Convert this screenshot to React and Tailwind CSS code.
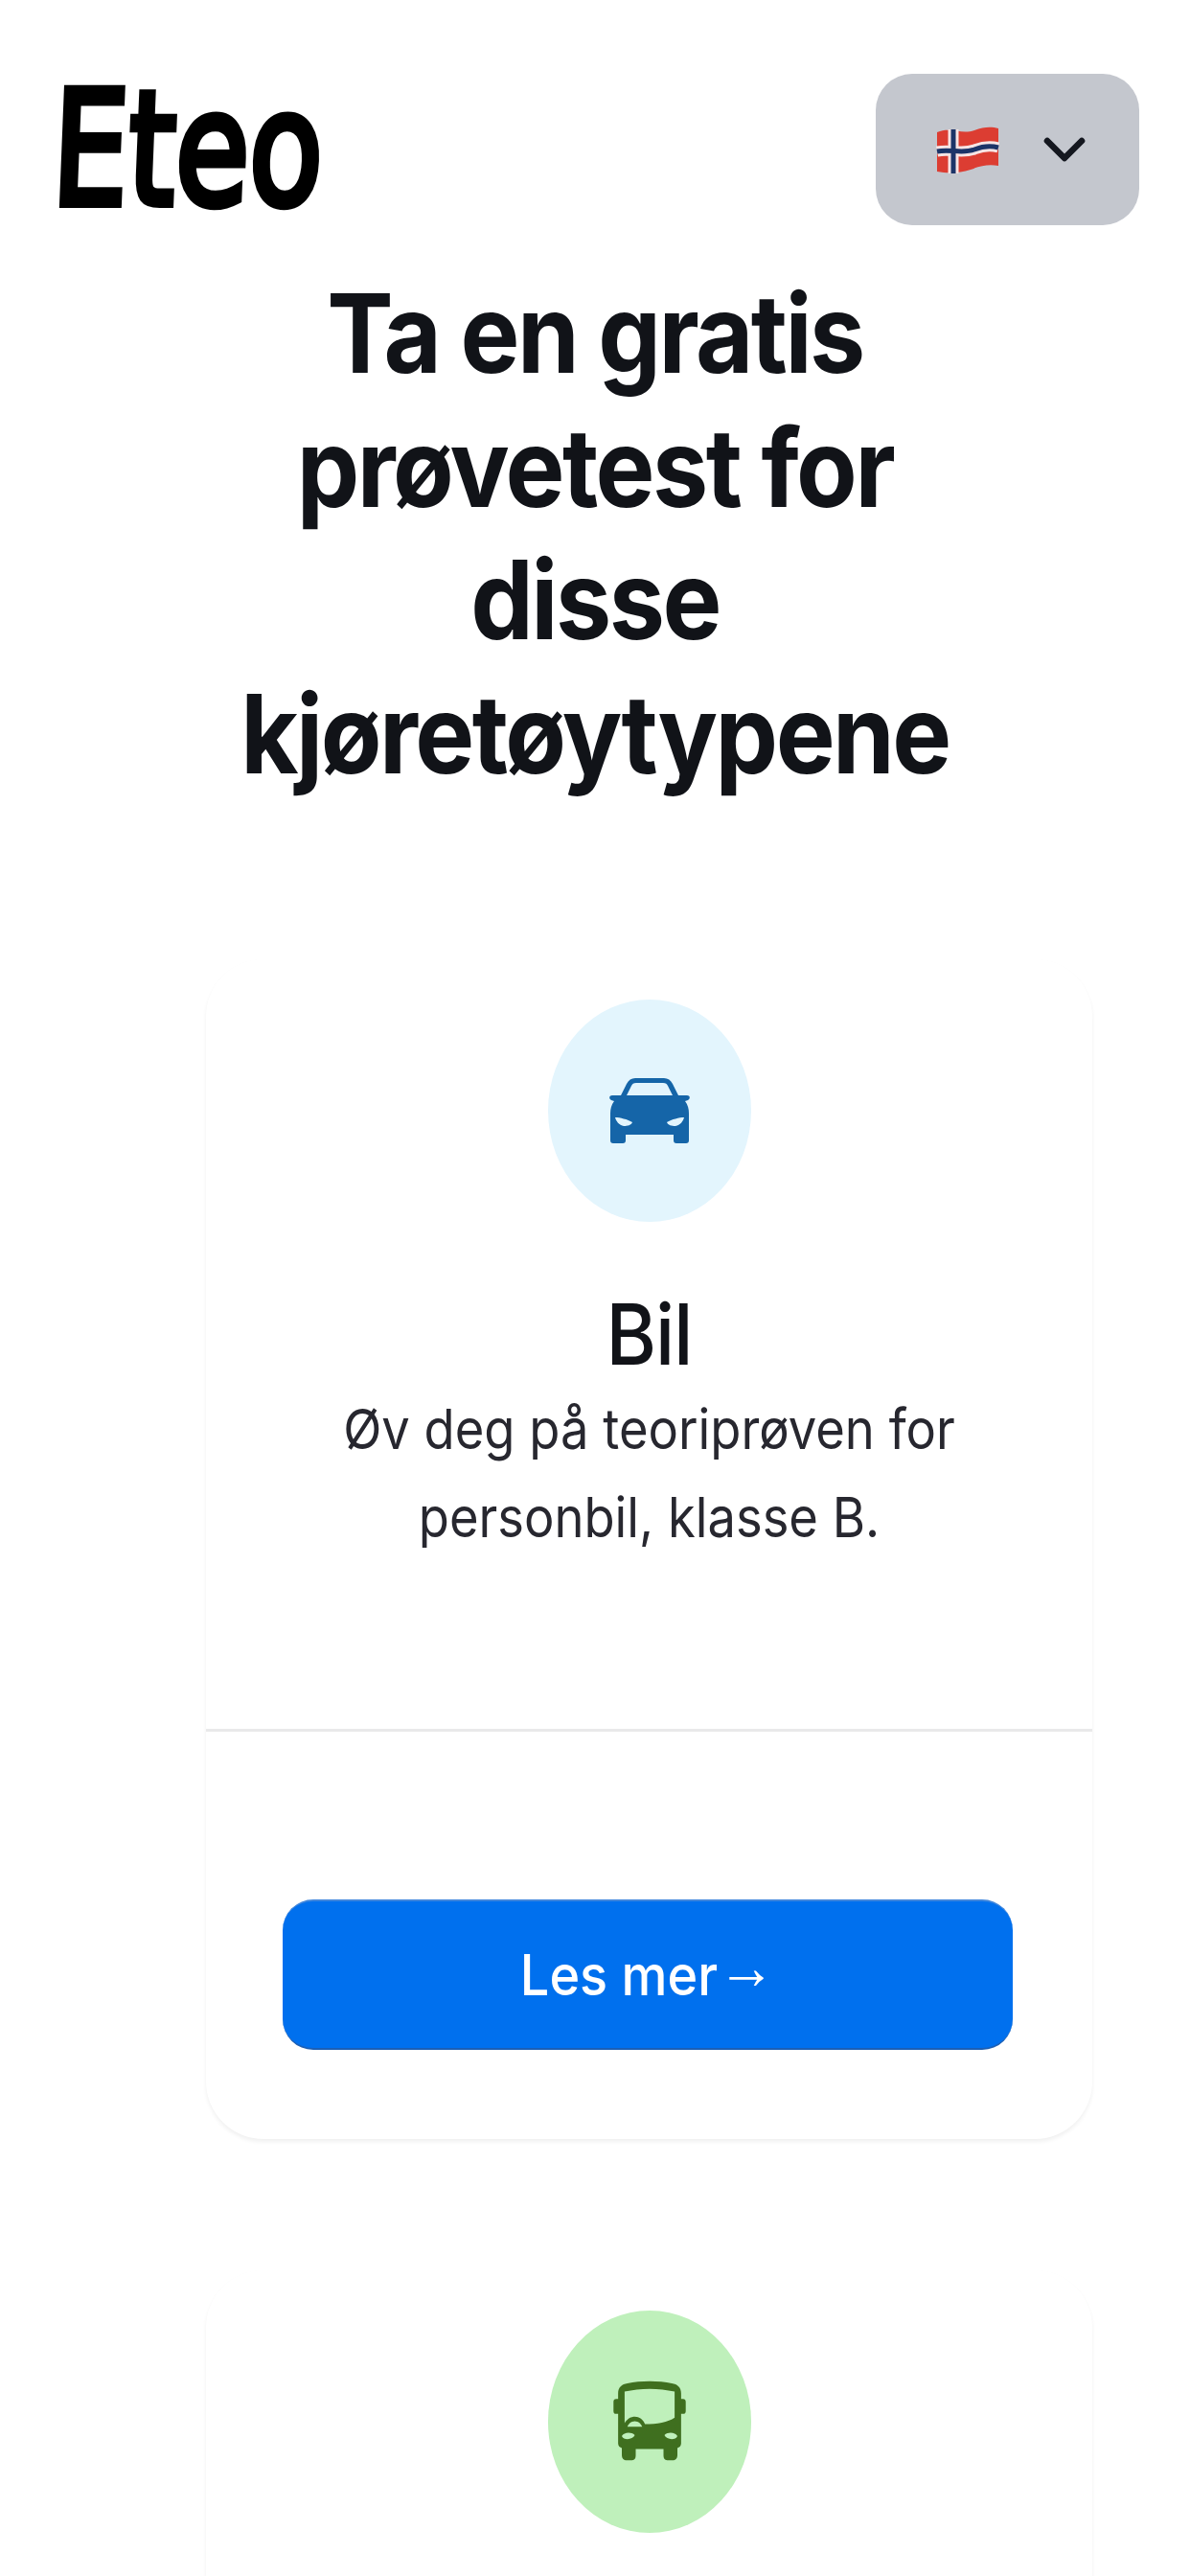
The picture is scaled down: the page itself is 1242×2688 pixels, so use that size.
import React from 'react';
import { ChevronDown } from 'lucide-react';

const FlagNo = () => (
  <svg viewBox="0 0 66 54" className="w-[66px] h-[54px]">
    <path d="M1 9C16 3 26 12 40 7C50 3 58 3 65 5V44C55 42 46 44 36 48C24 52 12 52 1 50Z" fill="#dc3d32" />
    <path d="M1 29C16 26 26 32 40 27C50 23 58 23 65 25" fill="none" stroke="#f6e4e4" strokeWidth="11" />
    <path d="M18 6V52" fill="none" stroke="#f6e4e4" strokeWidth="11" />
    <path d="M1 29C16 26 26 32 40 27C50 23 58 23 65 25" fill="none" stroke="#1c3468" strokeWidth="5" />
    <path d="M18 6V52" fill="none" stroke="#1c3468" strokeWidth="5" />
  </svg>
);

const CarIcon = () => (
  <svg viewBox="0 0 86 70" className="w-[86px] h-[70px]">
    <path
      fill="#1565a8"
      fillRule="evenodd"
      d="M28 1H58C62 1 65 3 67 7L73 19H82C85 19 86 22 83 24L80 25C83 29 84 33 84 38V66C84 68 83 69 81 69H71C69 69 68 68 68 66V60H18V66C18 68 17 69 15 69H5C3 69 2 68 2 66V38C2 33 3 29 6 25L3 24C0 22 1 19 4 19H13L19 7C21 3 24 1 28 1ZM29 6C26 6 25 7 24 9L19 19H67L62 9C61 7 60 6 57 6ZM7 42C12 42 20 44 25 47C24 50 20 51 16 51C11 50 8 46 7 42ZM79 42C74 42 66 44 61 47C62 50 66 51 70 51C75 50 78 46 79 42Z"
    />
  </svg>
);

const BusIcon = () => (
  <svg viewBox="0 0 80 90" className="w-[80px] h-[87px]">
    <path
      fill="#3f6f1f"
      fillRule="evenodd"
      d="M6 14C6 7 10 4 16 3C30 0 50 0 64 3C70 4 74 7 74 14V20H76C78 20 79 21 79 23V33C79 35 78 36 76 36H74V68C74 71 72 72 70 73V81C70 84 68 86 66 86H59C56 86 55 84 55 81V74H25V81C25 84 24 86 21 86H14C12 86 10 84 10 81V73C8 72 6 71 6 68V36H4C2 36 1 35 1 33V23C1 21 2 20 4 20H6ZM13 12V46C16 41 20 39 24 39C29 39 33 42 35 47C48 47 60 45 67 40V12C50 8 30 8 13 12ZM24 44C20 44 17 47 16 50L32 50C31 47 28 44 24 44ZM10 60C12 56 20 55 24 59C22 64 12 65 10 60ZM70 60C68 56 60 55 56 59C58 64 68 65 70 60Z"
    />
  </svg>
);

function VehicleCard({ circle, icon, title, lines }) {
  return (
    <div className="w-[925px] h-[1231px] bg-white rounded-[60px] shadow-[0_3px_4px_rgba(0,0,0,0.06)] flex flex-col items-center shrink-0">
      <div className={`w-[212px] h-[232px] rounded-[50%] flex items-center justify-center mt-[42px] ${circle}`}>
        {icon}
      </div>
      {/* second card runs off the bottom of the page, only its circle shows */}
      {title && (
        <>
          <h2 className="mt-[72px] text-[80px] leading-[90px] font-medium tracking-[-1px] text-[#111318] scale-y-110">{title}</h2>
          <p className="mt-[16px] text-[52.5px] leading-[84px] text-[#27272f] text-center scale-y-110">
            {lines[0]}
            <br />
            {lines[1]}
          </p>
          <div className="w-full h-[3px] bg-[#e9e9ea] mt-[183px]" />
          <div className="w-full pl-[80px] pr-[83px] mt-[175px]">
            <button className="w-full h-[157px] rounded-[32px] bg-[#0070ee] border-t-2 border-t-[#3f86dc] border-b-2 border-b-[#1c5fb4] flex items-center justify-center text-white text-[54px] font-medium">
              <span className="scale-y-110">
                Les mer
                <span className="inline-block -translate-y-[6px] font-['Liberation_Sans',sans-serif] font-normal text-[60px] leading-none">→</span>
              </span>
            </button>
          </div>
        </>
      )}
    </div>
  );
}

export default function App() {
  return (
    <div className="w-[1242px] h-[2688px] overflow-hidden bg-white font-['Inter','Noto_Sans',sans-serif]">
      <header className="flex items-start justify-between pl-[55px] pr-[53px] pt-[77px]">
        <span className="font-['DejaVu_Sans',sans-serif] text-[165px] leading-[158px] text-black [-webkit-text-stroke:8px_black] scale-x-[0.76] -skew-x-3 origin-left">
          Eteo
        </span>
        <button className="w-[275px] h-[158px] rounded-[38px] bg-[#c4c7ce] flex items-center justify-center gap-[32px] pl-[20px]">
          <FlagNo />
          <ChevronDown className="w-[72px] h-[72px] text-[#14171f]" strokeWidth={2.2} />
        </button>
      </header>

      <h1 className="mt-[43px] text-center text-[104px] leading-[126.5px] font-[650] tracking-[-2.5px] text-[#111318] scale-y-110 origin-top">
        Ta en gratis
        <br />
        prøvetest for
        <br />
        disse
        <br />
        kjøretøytypene
      </h1>

      <main className="flex flex-col items-start pl-[215px] gap-[137px] mt-[217px]">
        <VehicleCard
          circle="bg-[#e3f5fd]"
          icon={<CarIcon />}
          title="Bil"
          lines={['Øv deg på teoriprøven for', 'personbil, klasse B.']}
        />
        <VehicleCard circle="bg-[#bff0bb]" icon={<BusIcon />} />
      </main>
    </div>
  );
}
